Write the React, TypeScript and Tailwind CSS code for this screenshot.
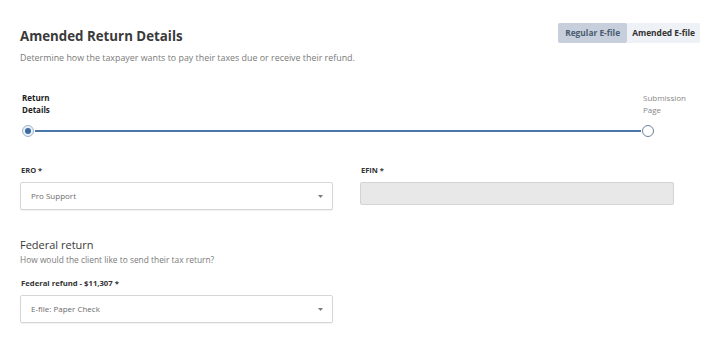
function Caret() {
  return (
    <svg width="5" height="3" viewBox="0 0 5 3" className="shrink-0">
      <path d="M0 0 L5 0 L2.5 3 Z" fill="#7a7a7a" />
    </svg>
  );
}

function SelectBox({ value }: { value: string }) {
  return (
    <div className="flex h-[28px] w-[313px] items-center justify-between rounded-[2px] border border-[#d6d6d6] bg-white pl-[10px] pr-[9px] shadow-[0_1px_1px_rgba(0,0,0,0.06)]">
      <span className="text-[8px] text-[#6b6b6b]">{value}</span>
      <Caret />
    </div>
  );
}

export default function App() {
  return (
    <div className="h-[343px] w-[720px] bg-white px-[20px] pt-[23px] font-['Open_Sans',sans-serif] text-[#333]">
      <div className="flex items-start justify-between">
        <div className="pt-[5px]">
          <h1 className="text-[13.3px] leading-[16px] font-bold text-[#3a3a3a]">Amended Return Details</h1>
          <p className="mt-[8px] text-[8.9px] leading-[11px] text-[#7a7a7a]">
            Determine how the taxpayer wants to pay their taxes due or receive their refund.
          </p>
        </div>
        <div className="flex h-[20px] items-stretch rounded-[2px] bg-[#eef1f5] text-[8.4px] font-bold">
          <div className="flex items-center rounded-[2px] bg-[#c6cfdb] px-[7px] text-[#4b5b70]">Regular E-file</div>
          <div className="flex items-center px-[5px] text-[#333]">Amended E-file</div>
        </div>
      </div>

      <div className="mt-[29px] w-[672px]">
        <div className="flex justify-between">
          <div className="pl-[2px] text-[8px] leading-[12px] font-bold text-[#222]">
            Return
            <br />
            Details
          </div>
          <div className="w-[49px] text-[8px] leading-[12px] text-[#888]">
            Submission
            <br />
            Page
          </div>
        </div>
        <div className="mt-[9px] flex items-center pl-[2px]">
          <div className="flex h-[12px] w-[12px] items-center justify-center rounded-full border border-[#9fb3cc] bg-[#eaf0f7]">
            <div className="h-[6px] w-[6px] rounded-full bg-[#3d6a9f]" />
          </div>
          <div className="mx-[1px] h-[1.5px] flex-1 bg-[#4b77a8]" />
          <div className="mr-[38px] h-[12px] w-[12px] rounded-full border-[1.5px] border-[#6d8198] bg-white" />
        </div>
      </div>

      <div className="mt-[29px] grid w-[654px] grid-cols-[313px_314px] gap-x-[27px]">
        <div>
          <div className="pl-[1px] text-[7.5px] leading-[9px] font-bold text-[#333]">ERO *</div>
          <div className="mt-[7px]">
            <SelectBox value="Pro Support" />
          </div>
        </div>
        <div>
          <div className="pl-[1px] text-[7.5px] leading-[9px] font-bold text-[#333]">EFIN *</div>
          <div className="mt-[7px] h-[23px] w-[314px] rounded-[2px] border border-[#d4d4d4] bg-[#e8e8e8]" />
        </div>
      </div>

      <div className="mt-[28px]">
        <h2 className="text-[11px] leading-[14px] text-[#3a3a3a]">Federal return</h2>
        <p className="mt-[3px] text-[8.4px] leading-[10px] text-[#7a7a7a]">How would the client like to send their tax return?</p>
        <div className="mt-[14px] pl-[1px] text-[7.7px] leading-[9px] font-bold text-[#333]">Federal refund - $11,307 *</div>
        <div className="mt-[7px]">
          <SelectBox value="E-file: Paper Check" />
        </div>
      </div>
    </div>
  );
}
